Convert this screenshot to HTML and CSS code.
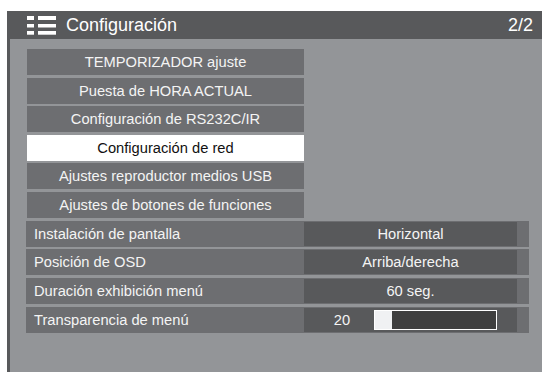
FILE: index.html
```html
<!DOCTYPE html>
<html lang="es">
<head>
<meta charset="UTF-8">
<title>Configuración</title>
<link rel="stylesheet" href="styles.css">
</head>
<body>
<div class="screen">
  <div class="title-bar">
    <svg class="menu-icon" width="30" height="20" viewBox="0 0 30 20">
      <rect x="0" y="0" width="7" height="4" fill="#fff"/>
      <rect x="11" y="0" width="18" height="4" fill="#fff"/>
      <rect x="0" y="8" width="7" height="3.5" fill="#fff"/>
      <rect x="11" y="8" width="18" height="3.5" fill="#fff"/>
      <rect x="0" y="15" width="7" height="3.7" fill="#fff"/>
      <rect x="11" y="15" width="18" height="3.7" fill="#fff"/>
    </svg>
    <span class="title">Configuración</span>
    <span class="page">2/2</span>
  </div>
  <div class="content">
    <div class="buttons">
      <div class="btn">TEMPORIZADOR ajuste</div>
      <div class="btn">Puesta de HORA ACTUAL</div>
      <div class="btn">Configuración de RS232C/IR</div>
      <div class="btn selected">Configuración de red</div>
      <div class="btn">Ajustes reproductor medios USB</div>
      <div class="btn">Ajustes de botones de funciones</div>
    </div>
    <div class="rows">
      <div class="row">
        <span class="label">Instalación de pantalla</span>
        <span class="value">Horizontal</span>
      </div>
      <div class="row">
        <span class="label">Posición de OSD</span>
        <span class="value">Arriba/derecha</span>
      </div>
      <div class="row">
        <span class="label">Duración exhibición menú</span>
        <span class="value">60 seg.</span>
      </div>
      <div class="row">
        <span class="label">Transparencia de menú</span>
        <span class="value slider-value">
          <span class="num">20</span>
          <span class="slider"><span class="fill" style="width: 17px"></span></span>
        </span>
      </div>
    </div>
  </div>
</div>
</body>
</html>
```

FILE: styles.css
```css
body {
  margin: 0;
  background-color: #fff;
  font-family: "Liberation Sans", Arial, sans-serif;
}
.screen {
  margin: 11px 0 0 7px;
  height: 361px;
  display: flex;
  flex-direction: column;
}
.title-bar {
  height: 28px;
  background-color: #58595b;
  color: #fff;
  display: flex;
  align-items: center;
  padding: 0 9px 0 20px;
}
.menu-icon {
  display: block;
  margin-top: 1px;
}
.title {
  font-size: 18px;
  margin-left: 9px;
  flex: 1;
}
.page {
  font-size: 18px;
}
.content {
  flex: 1;
  background-color: #939598;
  border-left: 3px solid #58595b;
  padding: 10px 13px 0 16px;
}
.buttons {
  display: flex;
  flex-direction: column;
  gap: 2.5px;
  width: 277px;
  margin-left: 1px;
}
.btn {
  height: 26px;
  line-height: 26px;
  background-color: #6d6e71;
  color: #f4f4f4;
  text-align: center;
  font-size: 14.7px;
}
.btn.selected {
  background-color: #fff;
  color: #111;
}
.rows {
  display: flex;
  flex-direction: column;
  gap: 2.7px;
  margin-top: 3.3px;
}
.row {
  height: 26px;
  background-color: #6d6e71;
  color: #f4f4f4;
  font-size: 14.7px;
  display: flex;
  align-items: center;
}
.label {
  width: 278px;
  padding-left: 8px;
  box-sizing: border-box;
}
.value {
  width: 213px;
  height: 24px;
  line-height: 24px;
  background-color: #58595b;
  text-align: center;
}
.slider-value {
  display: flex;
  align-items: center;
  text-align: left;
}
.num {
  width: 70px;
  padding-left: 6px;
  box-sizing: border-box;
  text-align: center;
}
.slider {
  width: 121px;
  height: 18px;
  border: 1px solid #fff;
  background-color: #3f3f3f;
  display: flex;
}
.fill {
  background-color: #f0f1f3;
}
```
